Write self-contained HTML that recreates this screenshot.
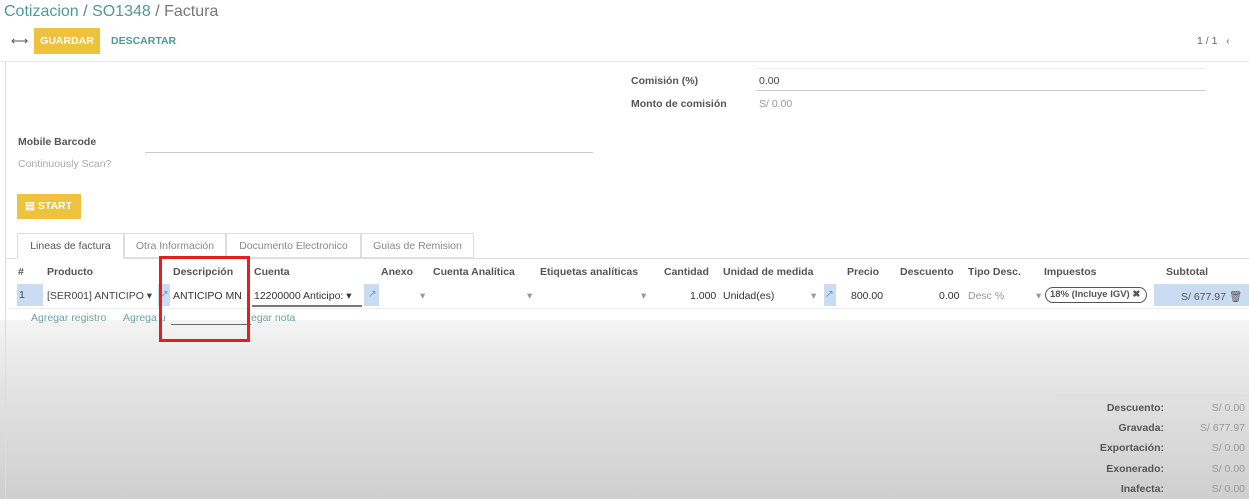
<!DOCTYPE html>
<html><head><meta charset="utf-8"><style>
*{margin:0;padding:0;box-sizing:border-box}
body{width:1249px;height:499px;overflow:hidden;position:relative;background:#fff;font-family:"Liberation Sans",sans-serif;font-size:10.5px;color:#444}
.a{position:absolute;white-space:nowrap}
.b{font-weight:bold;color:#555}
.g{color:#999}
.t{color:#4e9a95}
.hl{background:#c9dcf1}
</style></head><body>
<div class="a" style="left:0;top:0;width:1249px;height:62px;background:#fff;border-bottom:1px solid #e8e8e8"></div>
<div class="a" style="left:4px;top:3px;font-size:16px"><span class="t">Cotizacion</span> <span style="color:#777">/</span> <span class="t">SO1348</span> <span style="color:#777">/ Factura</span></div>
<div class="a" style="left:11px;top:34px;font-size:12px;color:#555">⟷</div>
<div class="a" style="left:34px;top:28px;width:66px;height:26px;background:#efc23d;color:#fff;font-weight:bold;font-size:10.5px;text-align:center;line-height:26px">GUARDAR</div>
<div class="a b" style="left:111px;top:35px;color:#4e9a95">DESCARTAR</div>
<div class="a" style="left:1197px;top:35px;color:#666">1 / 1 &nbsp; ‹</div>
<div class="a" style="left:0;top:320px;width:1249px;height:179px;background:linear-gradient(#f4f4f4,#e2e2e2 40%,#cfcfcf)"></div>
<div class="a" style="left:5px;top:62px;width:1px;height:437px;background:#ddd"></div>
<div class="a b" style="left:631px;top:75px">Comisión (%)</div>
<div class="a" style="left:759px;top:75px">0.00</div>
<div class="a" style="left:756px;top:90px;width:450px;height:1px;background:#ccc"></div>
<div class="a" style="left:756px;top:68px;width:450px;height:1px;background:#eee"></div>
<div class="a b" style="left:631px;top:98px">Monto de comisión</div>
<div class="a g" style="left:759px;top:98px">S/ 0.00</div>
<div class="a b" style="left:18px;top:136px">Mobile Barcode</div>
<div class="a" style="left:145px;top:152px;width:448px;height:1px;background:#ccc"></div>
<div class="a" style="left:18px;top:158px;color:#aaa">Continuously Scan?</div>
<div class="a" style="left:17px;top:194px;width:64px;height:25px;background:#efc23d;color:#fff;font-weight:bold;line-height:25px;padding-left:8px">▤ START</div>
<div class="a" style="left:6px;top:258px;width:1243px;height:1px;background:#ddd"></div>
<div class="a" style="left:17px;top:233px;width:107px;height:26px;border:1px solid #ddd;border-bottom:1px solid #fff;background:#fff;line-height:24px;text-align:center;color:#555">Lineas de factura</div>
<div class="a" style="left:124px;top:233px;width:102px;height:25px;border:1px solid #ddd;line-height:24px;text-align:center;color:#888">Otra Información</div>
<div class="a" style="left:226px;top:233px;width:135px;height:25px;border:1px solid #ddd;line-height:24px;text-align:center;color:#888">Documento Electronico</div>
<div class="a" style="left:361px;top:233px;width:113px;height:25px;border:1px solid #ddd;line-height:24px;text-align:center;color:#888">Guias de Remision</div>
<div class="a b" style="top:266px;left:18px">#</div>
<div class="a b" style="top:266px;left:47px">Producto</div>
<div class="a b" style="top:266px;left:173px">Descripción</div>
<div class="a b" style="top:266px;left:254px">Cuenta</div>
<div class="a b" style="top:266px;left:381px">Anexo</div>
<div class="a b" style="top:266px;left:433px">Cuenta Analítica</div>
<div class="a b" style="top:266px;left:540px">Etiquetas analíticas</div>
<div class="a b" style="top:266px;left:664px">Cantidad</div>
<div class="a b" style="top:266px;left:723px">Unidad de medida</div>
<div class="a b" style="top:266px;left:847px">Precio</div>
<div class="a b" style="top:266px;left:900px">Descuento</div>
<div class="a b" style="top:266px;left:968px">Tipo Desc.</div>
<div class="a b" style="top:266px;left:1044px">Impuestos</div>
<div class="a b" style="top:266px;left:1166px">Subtotal</div>
<div class="a" style="left:6px;top:283px;width:1243px;height:26px;border-bottom:1px solid #eee"></div>
<div class="a hl" style="left:17px;top:284px;width:26px;height:22px;padding:5px 2px">1</div>
<div class="a" style="left:47px;top:290px">[SER001] ANTICIPO ▾</div>
<div class="a hl" style="left:158px;top:284px;width:12px;height:22px"></div>
<div class="a" style="left:160px;top:288px;color:#6a9fd0">↗</div>
<div class="a" style="left:173px;top:290px;color:#333">ANTICIPO MN</div>
<div class="a" style="left:254px;top:290px;color:#333">12200000 Anticipo: ▾</div>
<div class="a" style="left:252px;top:305px;width:110px;height:2px;background:#777"></div>
<div class="a hl" style="left:364px;top:284px;width:15px;height:22px"></div>
<div class="a" style="left:368px;top:288px;color:#6a9fd0">↗</div>
<div class="a g" style="left:420px;top:290px">▾</div>
<div class="a g" style="left:527px;top:290px">▾</div>
<div class="a g" style="left:641px;top:290px">▾</div>
<div class="a" style="left:690px;top:290px;color:#333">1.000</div>
<div class="a" style="left:723px;top:290px;color:#333">Unidad(es)</div>
<div class="a g" style="left:811px;top:290px">▾</div>
<div class="a hl" style="left:824px;top:284px;width:12px;height:22px"></div>
<div class="a" style="left:825px;top:288px;color:#6a9fd0">↗</div>
<div class="a" style="left:851px;top:290px;color:#333">800.00</div>
<div class="a" style="left:939px;top:290px;color:#333">0.00</div>
<div class="a g" style="left:968px;top:290px">Desc %</div>
<div class="a g" style="left:1036px;top:290px">▾</div>
<div class="a" style="left:1045px;top:287px;width:102px;height:16px;border:1.5px solid #555;border-radius:8px;font-size:9.5px;font-weight:bold;line-height:13px;padding-left:4px;color:#555">18% (Incluye IGV) ✖</div>
<div class="a hl" style="left:1154px;top:284px;width:95px;height:22px"></div>
<div class="a" style="left:1181px;top:290px;color:#555">S/ 677.97 🗑</div>
<div class="a" style="left:31px;top:312px;color:#6aa59f">Agregar registro</div>
<div class="a" style="left:123px;top:312px;color:#6aa59f">Agrega u</div>
<div class="a" style="left:251px;top:312px;color:#6aa59f">egar nota</div>
<div class="a" style="left:171px;top:324px;width:80px;height:1px;background:#666"></div>
<div class="a" style="left:159px;top:256px;width:91px;height:86px;border:3px solid #e41e1e"></div>
<div class="a" style="left:1056px;top:395px;width:190px;height:1px;background:#ddd"></div>
<div class="a b" style="left:1060px;top:402px;width:104px;text-align:right">Descuento:</div><div class="a g" style="left:1160px;top:402px;width:85px;text-align:right">S/ 0.00</div>
<div class="a b" style="left:1060px;top:422px;width:104px;text-align:right">Gravada:</div><div class="a g" style="left:1160px;top:422px;width:85px;text-align:right">S/ 677.97</div>
<div class="a b" style="left:1060px;top:442px;width:104px;text-align:right">Exportación:</div><div class="a g" style="left:1160px;top:442px;width:85px;text-align:right">S/ 0.00</div>
<div class="a b" style="left:1060px;top:463px;width:104px;text-align:right">Exonerado:</div><div class="a g" style="left:1160px;top:463px;width:85px;text-align:right">S/ 0.00</div>
<div class="a b" style="left:1060px;top:483px;width:104px;text-align:right">Inafecta:</div><div class="a g" style="left:1160px;top:483px;width:85px;text-align:right">S/ 0.00</div>
</body></html>
